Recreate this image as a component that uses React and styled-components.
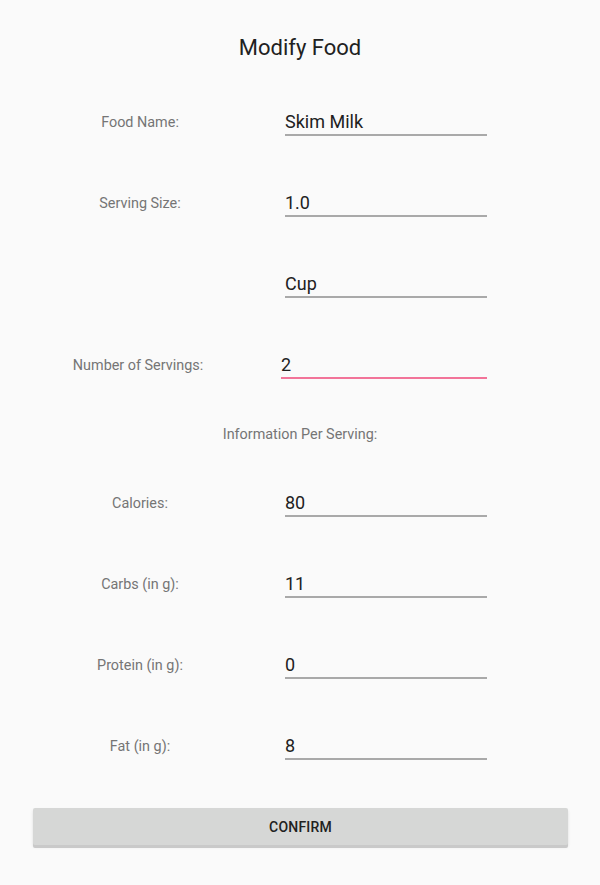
import React from "react";
import styled, { createGlobalStyle } from "styled-components";

const Global = createGlobalStyle`
  html, body { margin: 0; padding: 0; background: #fafafa; }
  body { font-family: Roboto, "Noto Sans", "Liberation Sans", sans-serif; }
  * { box-sizing: border-box; }
`;

const Page = styled.div`
  width: 600px;
  height: 885px;
  background: #fafafa;
  display: flex;
  flex-direction: column;
`;

const Title = styled.h1`
  margin: 0;
  padding: 35px 0 21px;
  height: 82px;
  font-size: 22px;
  line-height: 26px;
  font-weight: 400;
  color: #212121;
  text-align: center;
`;

const Row = styled.div`
  display: grid;
  grid-template-columns: 280px 202px;
  column-gap: 5px;
  align-items: center;
  height: 81px;
`;

const Label = styled.div`
  font-size: 14.4px;
  line-height: 20px;
  color: #757575;
  text-align: center;
  margin-left: ${(p) => (p.$shift ? `${p.$shift}px` : "0")};
`;

const Field = styled.div`
  font-size: 18px;
  line-height: 24px;
  color: #212121;
  border-bottom: 2px solid ${(p) => (p.$focused ? "#f27499" : "#a9a9a9")};
  margin-left: ${(p) => (p.$focused ? "-4px" : "0")};
  height: 26px;
  white-space: nowrap;
`;

const Section = styled.div`
  height: 57px;
  display: flex;
  align-items: center;
  justify-content: center;
  font-size: 14.4px;
  line-height: 20px;
  color: #757575;
`;

const ButtonWrap = styled.div`
  padding: 21px 32px 0 33px;
`;

const Button = styled.button`
  width: 100%;
  height: 37px;
  border: none;
  border-radius: 2px;
  background: #d6d7d6;
  box-shadow: 0 3px 0 #c9c9c9, 0 2px 3px rgba(0, 0, 0, 0.12);
  font-family: Roboto, "Noto Sans", "Liberation Sans", sans-serif;
  font-size: 14px;
  font-weight: 500;
  color: #212121;
  letter-spacing: 0.2px;
  padding: 0;
`;

const top = [
  { label: "Food Name:", value: "Skim Milk" },
  { label: "Serving Size:", value: "1.0" },
  { label: "", value: "Cup" },
  { label: "Number of Servings:", value: "2", focused: true, shift: -4 },
];

const bottom = [
  { label: "Calories:", value: "80" },
  { label: "Carbs (in g):", value: "11" },
  { label: "Protein (in g):", value: "0" },
  { label: "Fat (in g):", value: "8" },
];

function FormRow({ label, value, focused, shift }) {
  return (
    <Row>
      <Label $shift={shift}>{label}</Label>
      <Field $focused={focused}>{value}</Field>
    </Row>
  );
}

export default function App() {
  return (
    <Page>
      <Global />
      <Title>Modify Food</Title>
      {top.map((r, i) => (
        <FormRow key={i} {...r} />
      ))}
      <Section>Information Per Serving:</Section>
      {bottom.map((r, i) => (
        <FormRow key={i} {...r} />
      ))}
      <ButtonWrap>
        <Button>CONFIRM</Button>
      </ButtonWrap>
    </Page>
  );
}
